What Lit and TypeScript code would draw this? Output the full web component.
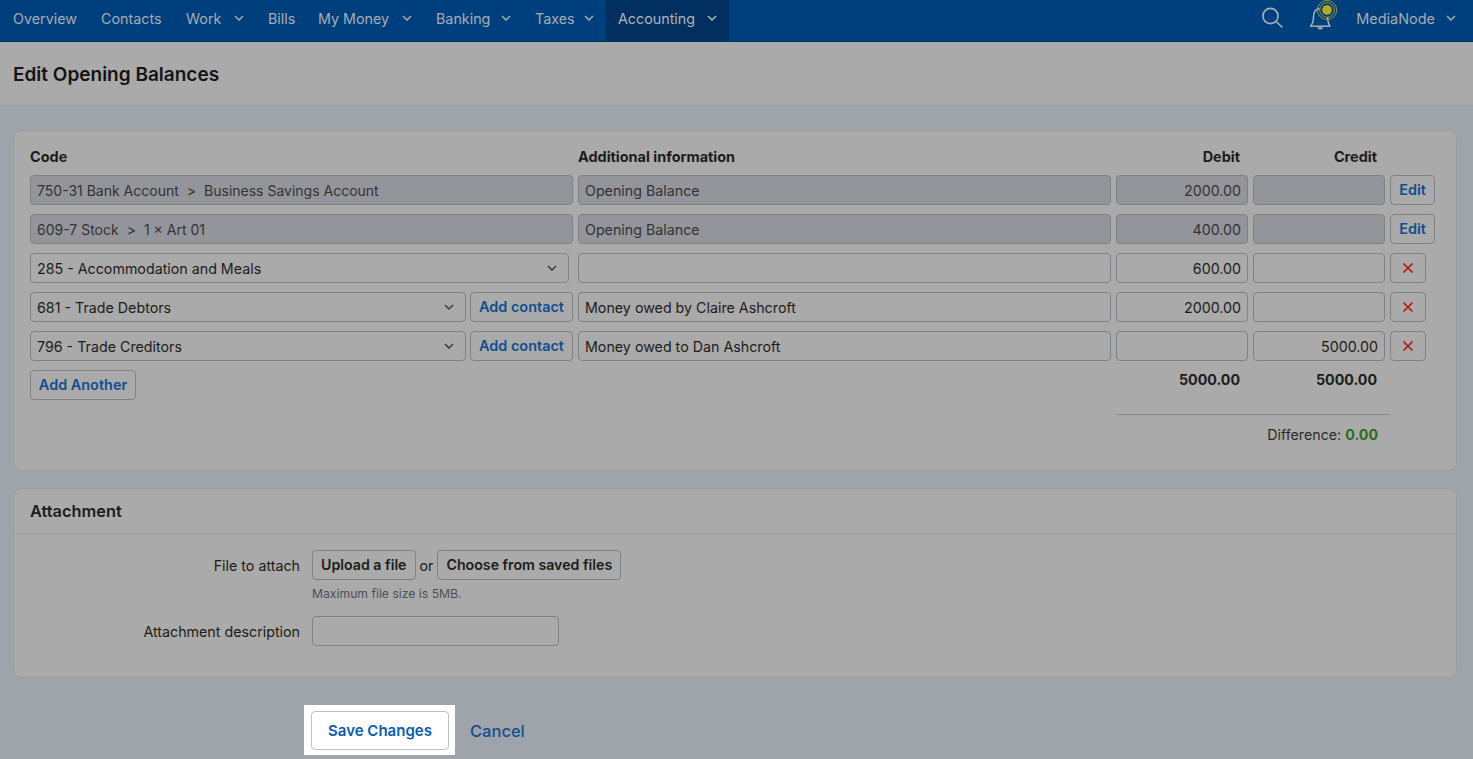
import { LitElement, html, css, svg } from 'lit';
import { customElement } from 'lit/decorators.js';

const chevron = html`<svg class="chev" width="10" height="6" viewBox="0 0 10 6"><path d=${'M1 1l4 4 4-4'} fill="none" stroke="currentColor" stroke-width="1.5"/></svg>`;

const navItems = [
  { label: 'Overview', width: 64 },
  { label: 'Contacts', width: 61 },
  { label: 'Work', width: 36, menu: true },
  { label: 'Bills', width: 26 },
  { label: 'My Money', width: 72, menu: true },
  { label: 'Banking', width: 53, menu: true },
  { label: 'Taxes', width: 37, menu: true },
  { label: 'Accounting', width: 77, menu: true, active: true },
];

@customElement('app-root')
export class AppRoot extends LitElement {
  static styles = css`
    :host {
      display: block;
      height: 759px;
      overflow: hidden;
      background: #9fa3aa;
      font-family: 'Inter', 'Liberation Sans', sans-serif;
      font-size: 14.25px;
      color: #1c1c1c;
    }

    /* top bar */
    .nav {
      display: flex;
      align-items: stretch;
      height: 41px;
      background: #003f7d;
      border-bottom: 1px solid #003468;
      color: #a6acb4;
      padding-right: 17px;
      font-size: 14.3px;
    }
    .nav-item {
      display: flex;
      align-items: center;
      gap: 12px;
      padding: 0 12px 5px;
      white-space: nowrap;
    }
    .nav-item:first-child { padding-left: 13px; }
    .nav-item.active {
      background: #002f60;
      color: #b0b3b7;
    }
    .nav-right {
      margin-left: auto;
      display: flex;
      align-items: center;
      padding-bottom: 5px;
      font-size: 14.45px;
    }
    .search { align-self: flex-start; margin-top: 7px; }
    .bell { align-self: flex-start; margin-left: 24px; margin-right: 18px; }
    .user { display: flex; align-items: center; gap: 11px; }

    .title {
      display: flex;
      align-items: center;
      padding: 1px 0 0 13px;
      height: 62px;
      background: #aaaaaa;
      border-bottom: 1px solid #979ba2;
      font-size: 19px;
      font-weight: 600;
      color: #141414;
    }

    .content { padding: 24px 16px 0 13px; }

    .card {
      background: #aaaaaa;
      border: 1px solid #9a9ea4;
      border-radius: 8px;
    }

    /* balances table */
    .lines {
      height: 341px;
      padding: 15px 16px 0;
      box-sizing: border-box;
    }
    .grid {
      display: grid;
      grid-template-columns: 543px 533px 132px 132px auto;
      column-gap: 5px;
      row-gap: 9px;
    }
    .rows { margin-top: 9px; }
    .head { font-weight: 700; font-size: 14.45px; line-height: 21px; margin-bottom: -1px; }
    .right { text-align: right; padding-right: 8px; }

    .field {
      height: 30px;
      box-sizing: border-box;
      border: 1px solid #7e8185;
      border-radius: 4px;
      display: flex;
      align-items: center;
      padding: 0 6px;
      white-space: pre;
      min-width: 0;
    }
    .field.num { justify-content: flex-end; }
    .field.off { background: #93959a; color: #333333; }
    .field.select { justify-content: space-between; padding-right: 11px; flex: 1; }
    .field .chev { color: #3a3a3a; }

    .code { display: flex; gap: 4px; }
    .code.wide { padding-right: 4px; }
    .field.code { gap: 8px; font-size: 14px; }

    .btn {
      height: 30px;
      box-sizing: border-box;
      border: 1px solid #7e8185;
      border-radius: 4px;
      display: inline-flex;
      align-items: center;
      justify-content: center;
      font-size: 14.45px;
      font-weight: 600;
      white-space: nowrap;
      padding-bottom: 2px;
    }
    .btn.link { color: #0f4f8f; }
    .btn.dark { color: #1c1c1c; padding: 0 8px 2px; font-size: 14.2px; }
    .add-contact { width: 103px; flex: none; }
    .edit { width: 45px; }
    .remove { width: 36px; padding-bottom: 1px; }
    .another { width: 106px; }

    .bottom {
      display: grid;
      grid-template-columns: 543px 533px 132px 132px;
      column-gap: 5px;
      margin-top: 9px;
    }
    .total { font-weight: 700; text-align: right; padding-right: 8px; line-height: 20px; }
    .summary {
      margin-left: 1086px;
      margin-top: 14px;
      width: 274px;
      border-top: 1px solid #84878b;
      padding: 10px 12px 0 0;
      box-sizing: border-box;
      text-align: right;
      line-height: 20px;
      color: #2a2a2a;
    }
    .summary b { color: #2f6a1f; font-weight: 700; }

    /* attachment */
    .attach { margin-top: 17px; height: 190px; box-sizing: border-box; }
    .attach-head {
      height: 44px;
      display: flex;
      align-items: center;
      padding-left: 16px;
      border-bottom: 1px solid #9a9ea4;
      font-size: 16.35px;
      font-weight: 600;
    }
    .attach-body {
      display: grid;
      grid-template-columns: 286px auto;
      column-gap: 12px;
      padding-top: 15px;
      justify-content: start;
    }
    .label { text-align: right; line-height: 30px; padding-top: 1px; }
    .label.first { padding-top: 2px; }
    .file-row { display: flex; align-items: center; gap: 4px; }
    .file-row span { line-height: 30px; padding-top: 2px; }
    .help { font-size: 12.2px; color: #4b5057; line-height: 16px; margin: 5px 0 14px; }
    .desc { width: 247px; }

    /* actions */
    .actions {
      display: flex;
      align-items: center;
      margin-top: 27px;
      margin-left: 291px;
    }
    .spot { background: #ffffff; padding: 6px 6px 5px 7px; }
    .save {
      width: 138px;
      height: 39px;
      box-sizing: border-box;
      border: 1px solid #b9c1cc;
      border-radius: 4px;
      display: flex;
      align-items: center;
      justify-content: center;
      color: #0b5cad;
      font-size: 15px;
      font-weight: 600;
    }
    .cancel {
      margin-left: 15px;
      color: #0f4f8f;
      font-size: 16.5px;
      font-weight: 500;
      padding-top: 2px;
    }
  `;

  private code(a: string, b: string) {
    return html`<div class="field off code"><span>${a}</span><span>&gt;</span><span>${b}</span></div>`;
  }

  private cross() {
    return html`<div class="btn remove">
      <svg width="10" height="10" viewBox="0 0 10 10"><path d="M0.5 0.5l9 9M9.5 0.5l-9 9" stroke="#b3211f" stroke-width="1.6" fill="none"/></svg>
    </div>`;
  }

  private select(text: string, contact: boolean) {
    return html`<div class="field select"><span>${text}</span>${chevron}</div>
      ${contact ? html`<div class="btn link add-contact">Add contact</div>` : ''}`;
  }

  render() {
    return html`
      <div class="nav">
        ${navItems.map(
          (n) => html`<div class="nav-item ${n.active ? 'active' : ''}">
            <span style="width:${n.width}px">${n.label}</span>${n.menu ? chevron : ''}
          </div>`,
        )}
        <div class="nav-right">
          <svg class="search" width="22" height="22" viewBox="0 0 22 22">
            <circle cx="8.5" cy="9" r="7.6" fill="none" stroke="#a9afb7" stroke-width="1.6"/>
            <path d="M14 14.5l6.5 6" stroke="#a9afb7" stroke-width="1.6" fill="none"/>
          </svg>
          <svg class="bell" width="30" height="32" viewBox="0 0 30 32">
            ${svg`<path d="M2.5 26c2-2 3-4 3-9 0-5 2.5-8 6-8.5M19.5 17c.2 4 1 7 2.5 9" fill="none" stroke="#a9afb7" stroke-width="1.5"/>
            <path d="M2 26.2h20.5" stroke="#a9afb7" stroke-width="1.5"/>
            <path d="M9.5 27.2a2.7 2.2 0 0 0 5.4 0z" fill="#a9afb7"/>
            <circle cx="19" cy="10" r="4.8" fill="#b8a81e"/>
            <circle cx="19" cy="10" r="7.3" fill="none" stroke="#b8a81e" stroke-width=".8"/>
            <circle cx="19" cy="10" r="9.6" fill="none" stroke="#b8a81e" stroke-width=".8"/>`}
          </svg>
          <div class="user"><span>MediaNode</span>${chevron}</div>
        </div>
      </div>

      <div class="title">Edit Opening Balances</div>

      <div class="content">
        <div class="card lines">
          <div class="grid">
            <div class="head">Code</div>
            <div class="head">Additional information</div>
            <div class="head right">Debit</div>
            <div class="head right">Credit</div>
            <div></div>
          </div>
          <div class="grid rows">
            ${this.code('750-31 Bank Account', 'Business Savings Account')}
            <div class="field off">Opening Balance</div>
            <div class="field off num">2000.00</div>
            <div class="field off"></div>
            <div class="btn link edit">Edit</div>

            ${this.code('609-7 Stock', '1 × Art 01')}
            <div class="field off">Opening Balance</div>
            <div class="field off num">400.00</div>
            <div class="field off"></div>
            <div class="btn link edit">Edit</div>

            <div class="code wide">${this.select('285 - Accommodation and Meals', false)}</div>
            <div class="field"></div>
            <div class="field num">600.00</div>
            <div class="field"></div>
            ${this.cross()}

            <div class="code">${this.select('681 - Trade Debtors', true)}</div>
            <div class="field">Money owed by Claire Ashcroft</div>
            <div class="field num">2000.00</div>
            <div class="field"></div>
            ${this.cross()}

            <div class="code">${this.select('796 - Trade Creditors', true)}</div>
            <div class="field">Money owed to Dan Ashcroft</div>
            <div class="field"></div>
            <div class="field num">5000.00</div>
            ${this.cross()}
          </div>
          <div class="bottom">
            <div><div class="btn link another">Add Another</div></div>
            <div></div>
            <div class="total">5000.00</div>
            <div class="total">5000.00</div>
          </div>
          <div class="summary">Difference: <b>0.00</b></div>
        </div>

        <div class="card attach">
          <div class="attach-head">Attachment</div>
          <div class="attach-body">
            <div class="label first">File to attach</div>
            <div>
              <div class="file-row">
                <div class="btn dark">Upload a file</div>
                <span>or</span>
                <div class="btn dark">Choose from saved files</div>
              </div>
              <div class="help">Maximum file size is 5MB.</div>
            </div>
            <div class="label">Attachment description</div>
            <div class="field desc"></div>
          </div>
        </div>

        <div class="actions">
          <div class="spot"><div class="save">Save Changes</div></div>
          <div class="cancel">Cancel</div>
        </div>
      </div>
    `;
  }
}
